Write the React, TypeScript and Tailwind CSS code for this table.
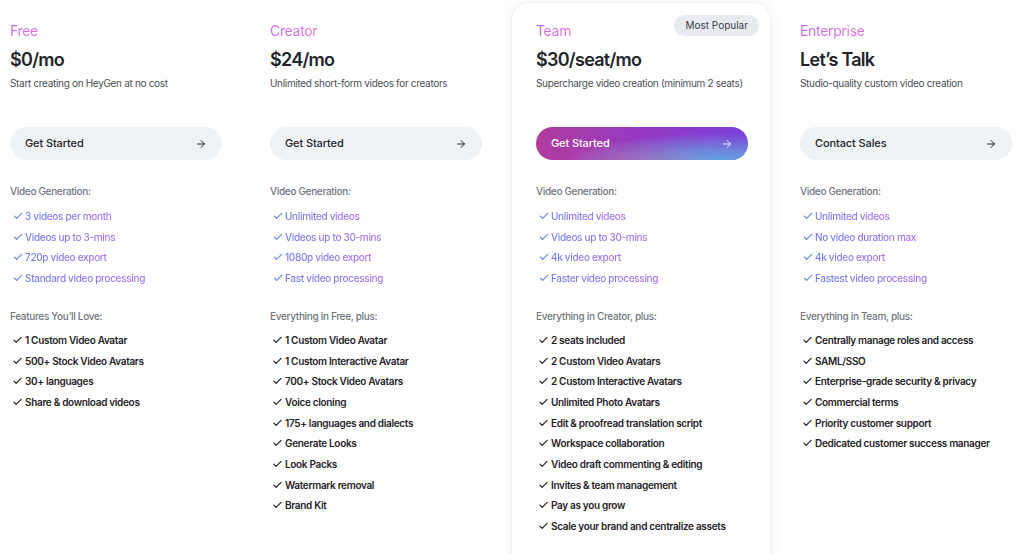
import { ArrowRight } from "lucide-react";

type Plan = {
  name: string;
  price: string;
  desc: string;
  cta: string;
  gen: string[];
  featTitle: string;
  features: string[];
  featured?: boolean;
};

const plans: Plan[] = [
  {
    name: "Free",
    price: "$0/mo",
    desc: "Start creating on HeyGen at no cost",
    cta: "Get Started",
    gen: ["3 videos per month", "Videos up to 3-mins", "720p video export", "Standard video processing"],
    featTitle: "Features You’ll Love:",
    features: ["1 Custom Video Avatar", "500+ Stock Video Avatars", "30+ languages", "Share & download videos"],
  },
  {
    name: "Creator",
    price: "$24/mo",
    desc: "Unlimited short-form videos for creators",
    cta: "Get Started",
    gen: ["Unlimited videos", "Videos up to 30-mins", "1080p video export", "Fast video processing"],
    featTitle: "Everything in Free, plus:",
    features: [
      "1 Custom Video Avatar",
      "1 Custom Interactive Avatar",
      "700+ Stock Video Avatars",
      "Voice cloning",
      "175+ languages and dialects",
      "Generate Looks",
      "Look Packs",
      "Watermark removal",
      "Brand Kit",
    ],
  },
  {
    name: "Team",
    price: "$30/seat/mo",
    desc: "Supercharge video creation (minimum 2 seats)",
    cta: "Get Started",
    gen: ["Unlimited videos", "Videos up to 30-mins", "4k video export", "Faster video processing"],
    featTitle: "Everything in Creator, plus:",
    features: [
      "2 seats included",
      "2 Custom Video Avatars",
      "2 Custom Interactive Avatars",
      "Unlimited Photo Avatars",
      "Edit & proofread translation script",
      "Workspace collaboration",
      "Video draft commenting & editing",
      "Invites & team management",
      "Pay as you grow",
      "Scale your brand and centralize assets",
    ],
    featured: true,
  },
  {
    name: "Enterprise",
    price: "Let’s Talk",
    desc: "Studio-quality custom video creation",
    cta: "Contact Sales",
    gen: ["Unlimited videos", "No video duration max", "4k video export", "Fastest video processing"],
    featTitle: "Everything in Team, plus:",
    features: [
      "Centrally manage roles and access",
      "SAML/SSO",
      "Enterprise-grade security & privacy",
      "Commercial terms",
      "Priority customer support",
      "Dedicated customer success manager",
    ],
  },
];

function Check({ className }: { className: string }) {
  return (
    <svg viewBox="0 0 12 10" className={className} fill="none" stroke="currentColor" strokeWidth="1.5" strokeLinecap="round" strokeLinejoin="round">
      <path d="M1.5 5.2 4.3 8 10.5 1.8" />
    </svg>
  );
}

function Column({ plan }: { plan: Plan }) {
  return (
    <div className="flex flex-col tracking-[-0.02em]">
      <div className="flex h-5 items-center">
        <span className="bg-gradient-to-r from-[#c46cf2] to-[#e572d8] bg-clip-text text-[14px] leading-5 text-transparent">
          {plan.name}
        </span>
      </div>
      <div className="mt-[7px] text-[18px] leading-6 font-semibold tracking-[-0.04em] text-[#22252b]">{plan.price}</div>
      <div className="mt-1 whitespace-nowrap text-[10px] leading-[14px] text-[#4b5058]">{plan.desc}</div>

      {plan.featured ? (
        <button className="relative mt-[37px] flex h-[33px] w-[212px] items-center justify-between overflow-hidden rounded-full bg-gradient-to-r from-[#b13b9d] via-[#9538c4] to-[#7b3fd8] px-[15px] text-[11px] font-medium tracking-[-0.01em] text-white">
          <span className="absolute inset-0 bg-[radial-gradient(ellipse_at_85%_120%,#5fb3e3_0%,rgba(95,179,227,0.6)_30%,transparent_60%)]" />
          <span className="absolute inset-0 bg-[radial-gradient(ellipse_at_45%_130%,rgba(214,90,150,0.55)_0%,transparent_50%)]" />
          <span className="relative">{plan.cta}</span>
          <ArrowRight size={12} strokeWidth={1.75} className="relative" />
        </button>
      ) : (
        <button className="mt-[37px] flex h-[33px] w-[212px] items-center justify-between rounded-full bg-[#f0f3f6] px-[15px] text-[11px] font-medium tracking-[-0.01em] text-[#22252b]">
          <span>{plan.cta}</span>
          <ArrowRight size={12} strokeWidth={2} />
        </button>
      )}

      <div className="mt-6 text-[10px] leading-[14px] font-medium text-[#707680]">Video Generation:</div>
      <ul className="mt-[7.6px] flex flex-col">
        {plan.gen.map((g) => (
          <li key={g} className="flex h-[20.7px] items-center gap-[2px] pl-[3px]">
            <Check className="h-[8px] w-[10px] text-[#6c8ae8]" />
            <span className="bg-gradient-to-r from-[#6f7cf0] to-[#a970ec] bg-clip-text text-[10px] leading-[14px] font-medium text-transparent">
              {g}
            </span>
          </li>
        ))}
      </ul>

      <div className="mt-[20.6px] text-[10px] leading-[14px] font-medium text-[#707680]">{plan.featTitle}</div>
      <ul className="mt-[6.6px] flex flex-col">
        {plan.features.map((f) => (
          <li key={f} className="flex h-[20.7px] items-center gap-[2px] pl-[2px]">
            <Check className="h-[8px] w-[11px] text-[#1f2328]" />
            <span className="text-[10px] leading-[14px] font-semibold text-[#1f2328]">{f}</span>
          </li>
        ))}
      </ul>
    </div>
  );
}

export default function App() {
  return (
    <div className="h-[554px] w-[1024px] overflow-hidden bg-white font-['Inter',sans-serif]">
      <div className="-ml-[14px] flex items-stretch">
        <div className="w-[260px] shrink-0 px-6 pt-[21px]">
          <Column plan={plans[0]} />
        </div>
        <div className="w-[260px] shrink-0 px-6 pt-[21px]">
          <Column plan={plans[1]} />
        </div>
        <div className="relative mx-[5px] mt-[2px] h-[600px] w-[260px] shrink-0 rounded-t-[18px] border border-[#eef0f3] bg-white px-6 pt-[18px] shadow-[0_0_14px_rgba(15,23,42,0.06)]">
          <span className="absolute top-[12px] right-[11px] flex h-[21px] items-center rounded-full bg-[#e8ecf1] px-[11px] text-[10px] text-[#3a3f47]">
            Most Popular
          </span>
          <Column plan={plans[2]} />
        </div>
        <div className="w-[260px] shrink-0 px-6 pt-[21px]">
          <Column plan={plans[3]} />
        </div>
      </div>
    </div>
  );
}
